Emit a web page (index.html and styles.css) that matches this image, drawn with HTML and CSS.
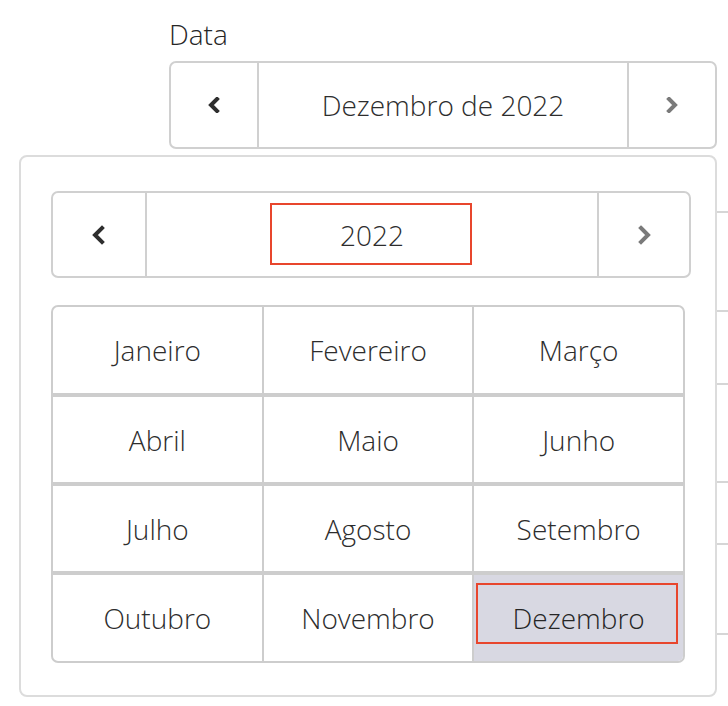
FILE: index.html
```html
<!DOCTYPE html>
<html lang="pt-BR">

<head>
    <meta charset="UTF-8">
    <meta name="viewport" content="width=device-width, initial-scale=1.0">
    <title>Data</title>
    <link rel="stylesheet" href="styles.css">
</head>

<body>
    <div class="page">
        <div class="field">
            <label class="field-label">Data</label>
            <div class="nav-bar">
                <button class="nav-btn nav-prev" type="button">
                    <svg width="14" height="16" viewBox="0 0 14 16"><polyline points="10,2 4,8 10,14" /></svg>
                </button>
                <div class="nav-title">Dezembro de 2022</div>
                <button class="nav-btn nav-next" type="button">
                    <svg width="14" height="16" viewBox="0 0 14 16"><polyline points="4,2 10,8 4,14" /></svg>
                </button>
            </div>
        </div>

        <!-- conteudo por tras do seletor -->
        <div class="list">
            <div class="list-row r1"></div>
            <div class="list-row r2"></div>
            <div class="list-row r3"></div>
            <div class="list-row r4"></div>
            <div class="list-row r5"></div>
            <div class="list-row r6"></div>
        </div>

        <div class="picker">
            <div class="nav-bar year-bar">
                <button class="nav-btn nav-prev" type="button">
                    <svg width="18" height="20" viewBox="0 0 18 20"><polyline points="12,3 5,10 12,17" /></svg>
                </button>
                <div class="nav-title">
                    <span class="year">2022</span>
                    <span class="mark year-mark"></span>
                </div>
                <button class="nav-btn nav-next" type="button">
                    <svg width="18" height="20" viewBox="0 0 18 20"><polyline points="6,3 13,10 6,17" /></svg>
                </button>
            </div>

            <div class="months">
                <div class="month-row">
                    <div class="month">Janeiro</div>
                    <div class="month">Fevereiro</div>
                    <div class="month">Março</div>
                </div>
                <div class="month-row">
                    <div class="month">Abril</div>
                    <div class="month">Maio</div>
                    <div class="month">Junho</div>
                </div>
                <div class="month-row">
                    <div class="month">Julho</div>
                    <div class="month">Agosto</div>
                    <div class="month">Setembro</div>
                </div>
                <div class="month-row">
                    <div class="month">Outubro</div>
                    <div class="month">Novembro</div>
                    <div class="month selected">Dezembro<span class="mark month-mark"></span></div>
                </div>
            </div>
        </div>
    </div>
</body>

</html>
```

FILE: styles.css
```css
* {
    margin: 0;
    padding: 0;
    box-sizing: border-box;
}

body {
    background: #ffffff;
    color: #2d2d2d;
    font-family: 'Open Sans', 'Liberation Sans', sans-serif;
    font-weight: 300;
}

.page {
    position: relative;
    width: 728px;
    height: 706px;
    overflow: hidden;
}

.field {
    margin-left: 169px;
    width: 548px;
    padding-top: 15px;
}

.field-label {
    display: block;
    font-size: 28px;
    line-height: 38px;
    margin-bottom: 8px;
    color: #262626;
}

.nav-bar {
    display: flex;
    height: 88px;
    border: 2px solid #d0d0d0;
    border-radius: 7px;
}

.nav-btn {
    width: 88px;
    background: none;
    border: none;
    display: flex;
    align-items: center;
    justify-content: center;
    font: inherit;
}

.nav-btn svg polyline {
    fill: none;
    stroke-width: 4;
    stroke-linecap: square;
    stroke-linejoin: miter;
}

.nav-prev {
    border-right: 2px solid #d0d0d0;
}

.nav-prev svg polyline {
    stroke: #2e2e2e;
}

.nav-next {
    border-left: 2px solid #d0d0d0;
}

.nav-next svg polyline {
    stroke: #7a7a7a;
}

.nav-title {
    flex: 1;
    display: flex;
    align-items: center;
    justify-content: center;
    font-size: 28px;
    position: relative;
}

.list {
    margin-left: 169px;
}

.list-row {
    border-bottom: 2px solid #d6d6d6;
}

.r1 { height: 64px; }
.r2 { height: 99px; }
.r3 { height: 73px; }
.r4 { height: 98px; }
.r5 { height: 62px; }
.r6 { height: 90px; }

.picker {
    position: absolute;
    left: 19px;
    top: 155px;
    width: 698px;
    height: 542px;
    background: #ffffff;
    border: 2px solid #dcdcdc;
    border-radius: 8px;
    padding: 34px 24px 0 30px;
}

.year-bar {
    width: 640px;
    height: 87px;
}

.year-bar .nav-prev {
    width: 94px;
}

.year-bar .nav-next {
    width: 92px;
}

.year {
    font-size: 28px;
}

.mark {
    position: absolute;
    border: 2px solid #e8462d;
}

.year-mark {
    left: 123px;
    top: 10px;
    width: 202px;
    height: 62px;
}

.months {
    margin-top: 27px;
    width: 634px;
    border: 2px solid #cdcdcd;
    border-radius: 7px;
    overflow: hidden;
}

.month-row {
    display: flex;
    height: 89px;
    border-top: 2px solid #cdcdcd;
    border-bottom: 2px solid #cdcdcd;
}

.month-row:first-child {
    border-top: none;
    height: 88px;
}

.month-row:last-child {
    border-bottom: none;
    height: 88px;
}

.month {
    flex: 1;
    display: flex;
    align-items: center;
    justify-content: center;
    font-size: 28px;
    position: relative;
}

.month + .month {
    border-left: 2px solid #cdcdcd;
}

.month.selected {
    background: #d8d8e2;
    color: #262626;
}

.month-mark {
    left: 2px;
    top: 8px;
    right: 5px;
    bottom: 17px;
}
```
